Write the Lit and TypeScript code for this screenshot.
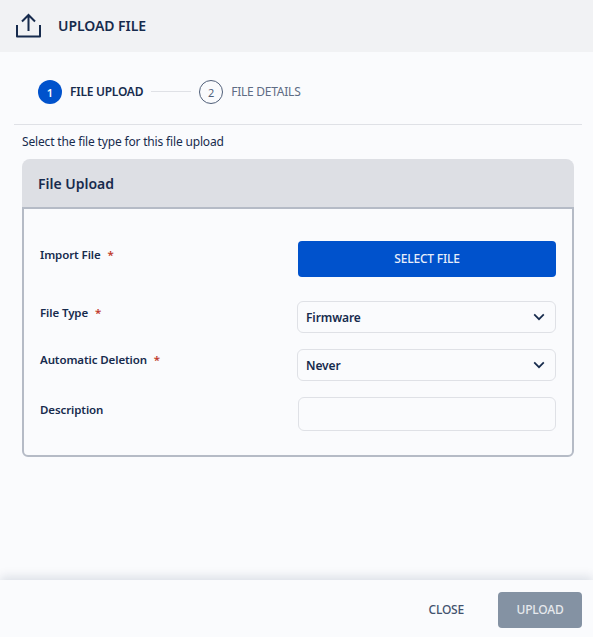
import { LitElement, html, css } from "lit";
import { customElement } from "lit/decorators.js";

const chevron = html`<svg class="chev" width="12" height="8" viewBox="0 0 12 8" fill="none"><path d="M1.2 1.4 6 6.2l4.8-4.8" stroke="#172b4d" stroke-width="1.7"/></svg>`;

@customElement("app-root")
export class AppRoot extends LitElement {
  static styles = css`
    :host { display: flex; flex-direction: column; height: 100vh; background: #fafbfd; color: #172b4d; font-family: "Noto Sans", sans-serif; overflow: hidden; }
    * { box-sizing: border-box; }
    .top { height: 52px; flex: none; background: #f1f2f4; display: flex; align-items: center; padding-left: 16px; gap: 17px; }
    .top svg { display: block; margin-top: -2px; }
    .top h1 { margin: -2px 0 0; font-size: 14px; font-weight: 600; letter-spacing: -0.05px; }
    .main { flex: 1; padding: 0 11px 0 14px; }
    .steps { height: 72px; padding: 8px 0 0 24px; display: flex; align-items: center; font-size: 12px; font-weight: 600; letter-spacing: -0.25px; }
    .dot { width: 24px; height: 24px; border-radius: 50%; display: flex; align-items: center; justify-content: center; background: #0052cc; color: #fff; font-weight: 600; font-size: 11px; margin-right: 8px; letter-spacing: 0; }
    .dot.off { background: none; border: 1px solid #505f79; color: #505f79; font-weight: 400; }
    .txt { margin-top: -2px; }
    .off-t { color: #5e6c84; font-weight: 400; }
    .ln { width: 40px; height: 1px; background: #dfe1e6; margin: -2px 8px 0; }
    .sub { border-top: 1px solid #dfe1e6; padding: 8px 0 0 8px; font-size: 12px; line-height: 17px; height: 35px; letter-spacing: -0.17px; }
    .card { margin-left: 8px; width: 552px; }
    .card header { height: 48px; background: #dddfe4; border-radius: 8px 8px 0 0; display: flex; align-items: center; padding-left: 16px; font-size: 14px; font-weight: 600; }
    .form { border: 2px solid #b5bbc6; border-radius: 0 0 6px 6px; height: 250px; padding: 32px 16px 24px 16px; display: flex; flex-direction: column; }
    .row { display: flex; }
    .row label { width: 258px; flex: none; font-size: 11.5px; font-weight: 600; line-height: 20px; letter-spacing: -0.1px; }
    .req { color: #c0392b; margin-left: 4px; }
    .btn { width: 258px; height: 36px; padding-bottom: 2px; background: #0052cc; color: #e8eefa; border-radius: 4px; display: flex; align-items: center; justify-content: center; font-size: 12px; font-weight: 500; letter-spacing: -0.2px; }
    .sel { width: 259px; height: 32px; margin-left: -1px; border: 1px solid #dfe1e6; border-radius: 6px; display: flex; align-items: center; justify-content: space-between; padding: 0 10px 0 8px; font-size: 12px; font-weight: 600; letter-spacing: -0.1px; }
    .inp { width: 258px; height: 34px; border: 1px solid #dfe1e6; border-radius: 6px; }
    .r1 { margin-bottom: 24px; } .r1 label { padding-top: 4px; }
    .r2 { margin-bottom: 16px; } .r2 label { padding-top: 2px; }
    .r3 { margin-bottom: 16px; } .r3 label { padding-top: 1px; }
    .r4 label { padding-top: 3px; }
    .foot { height: 57px; flex: none; background: #fafbfd; box-shadow: 0 -3px 10px rgba(9,30,66,.13); display: flex; align-items: flex-start; justify-content: flex-end; padding: 12px 11px 0 0; font-size: 12px; font-weight: 500; letter-spacing: -0.2px; }
    .close { color: #42526e; height: 34px; display: flex; align-items: center; margin-right: 34px; }
    .up { width: 84px; height: 36px; padding-bottom: 2px; background: #8492a3; color: #e6e9ed; border-radius: 4px; display: flex; align-items: center; justify-content: center; }
  `;

  render() {
    return html`
      <div class="top">
        <svg width="25" height="25" viewBox="0 0 25 25" fill="none" stroke="#172b4d" stroke-width="2">
          <path d="M12.5 18V2M6 8.5l6.5-6.5 6.5 6.5"/>
          <path d="M1 12v11.5h23V12" stroke-linejoin="round"/>
        </svg>
        <h1>UPLOAD FILE</h1>
      </div>
      <div class="main">
        <div class="steps">
          <span class="dot">1</span><span class="txt">FILE UPLOAD</span><span class="ln"></span>
          <span class="dot off">2</span><span class="txt off-t">FILE DETAILS</span>
        </div>
        <div class="sub">Select the file type for this file upload</div>
        <div class="card">
          <header>File Upload</header>
          <div class="form">
            <div class="row r1"><label>Import File <span class="req">*</span></label><div class="btn">SELECT FILE</div></div>
            <div class="row r2"><label>File Type <span class="req">*</span></label><div class="sel">Firmware ${chevron}</div></div>
            <div class="row r3"><label>Automatic Deletion <span class="req">*</span></label><div class="sel">Never ${chevron}</div></div>
            <div class="row r4"><label>Description</label><div class="inp"></div></div>
          </div>
        </div>
      </div>
      <div class="foot">
        <div class="close">CLOSE</div>
        <div class="up">UPLOAD</div>
      </div>
    `;
  }
}
